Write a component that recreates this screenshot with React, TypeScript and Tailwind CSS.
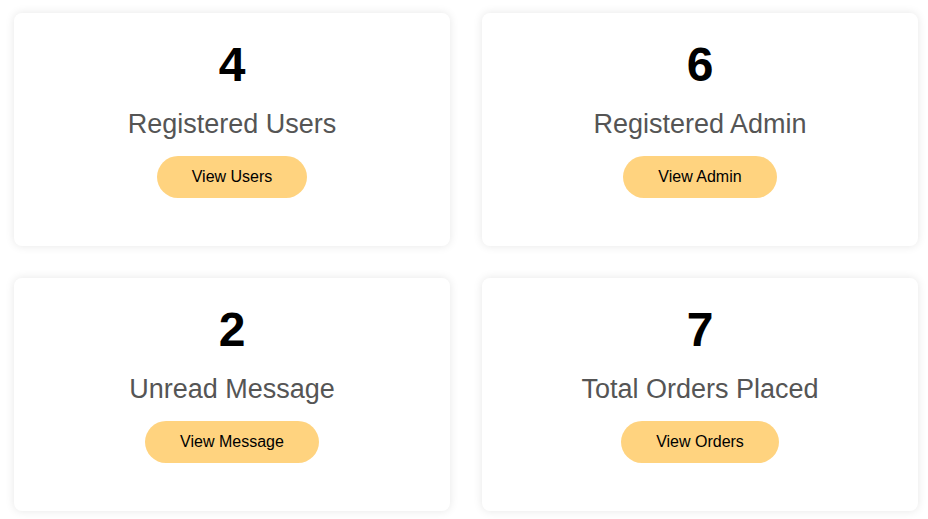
const stats = [
  { count: 4, label: "Registered Users", action: "View Users" },
  { count: 6, label: "Registered Admin", action: "View Admin" },
  { count: 2, label: "Unread Message", action: "View Message" },
  { count: 7, label: "Total Orders Placed", action: "View Orders" },
];

export default function App() {
  return (
    <div className="min-h-screen bg-white pl-[14px] pt-[13px] font-['Liberation_Sans',Arial,sans-serif]">
      <div className="grid grid-cols-[436px_436px] gap-8">
        {stats.map((s) => (
          <div
            key={s.label}
            className="flex h-[233px] flex-col items-center rounded-lg bg-white pt-6 shadow-[0_0_10px_rgba(0,0,0,0.1)]"
          >
            <h3 className="text-[48px] leading-[55px] font-bold text-black">{s.count}</h3>
            <p className="mt-[17px] text-[27px] leading-[31px] text-[#555]">{s.label}</p>
            <button className="mt-4 flex h-[42px] items-center rounded-full bg-[#ffd37f] px-[35px] text-base text-black">
              {s.action}
            </button>
          </div>
        ))}
      </div>
    </div>
  );
}
